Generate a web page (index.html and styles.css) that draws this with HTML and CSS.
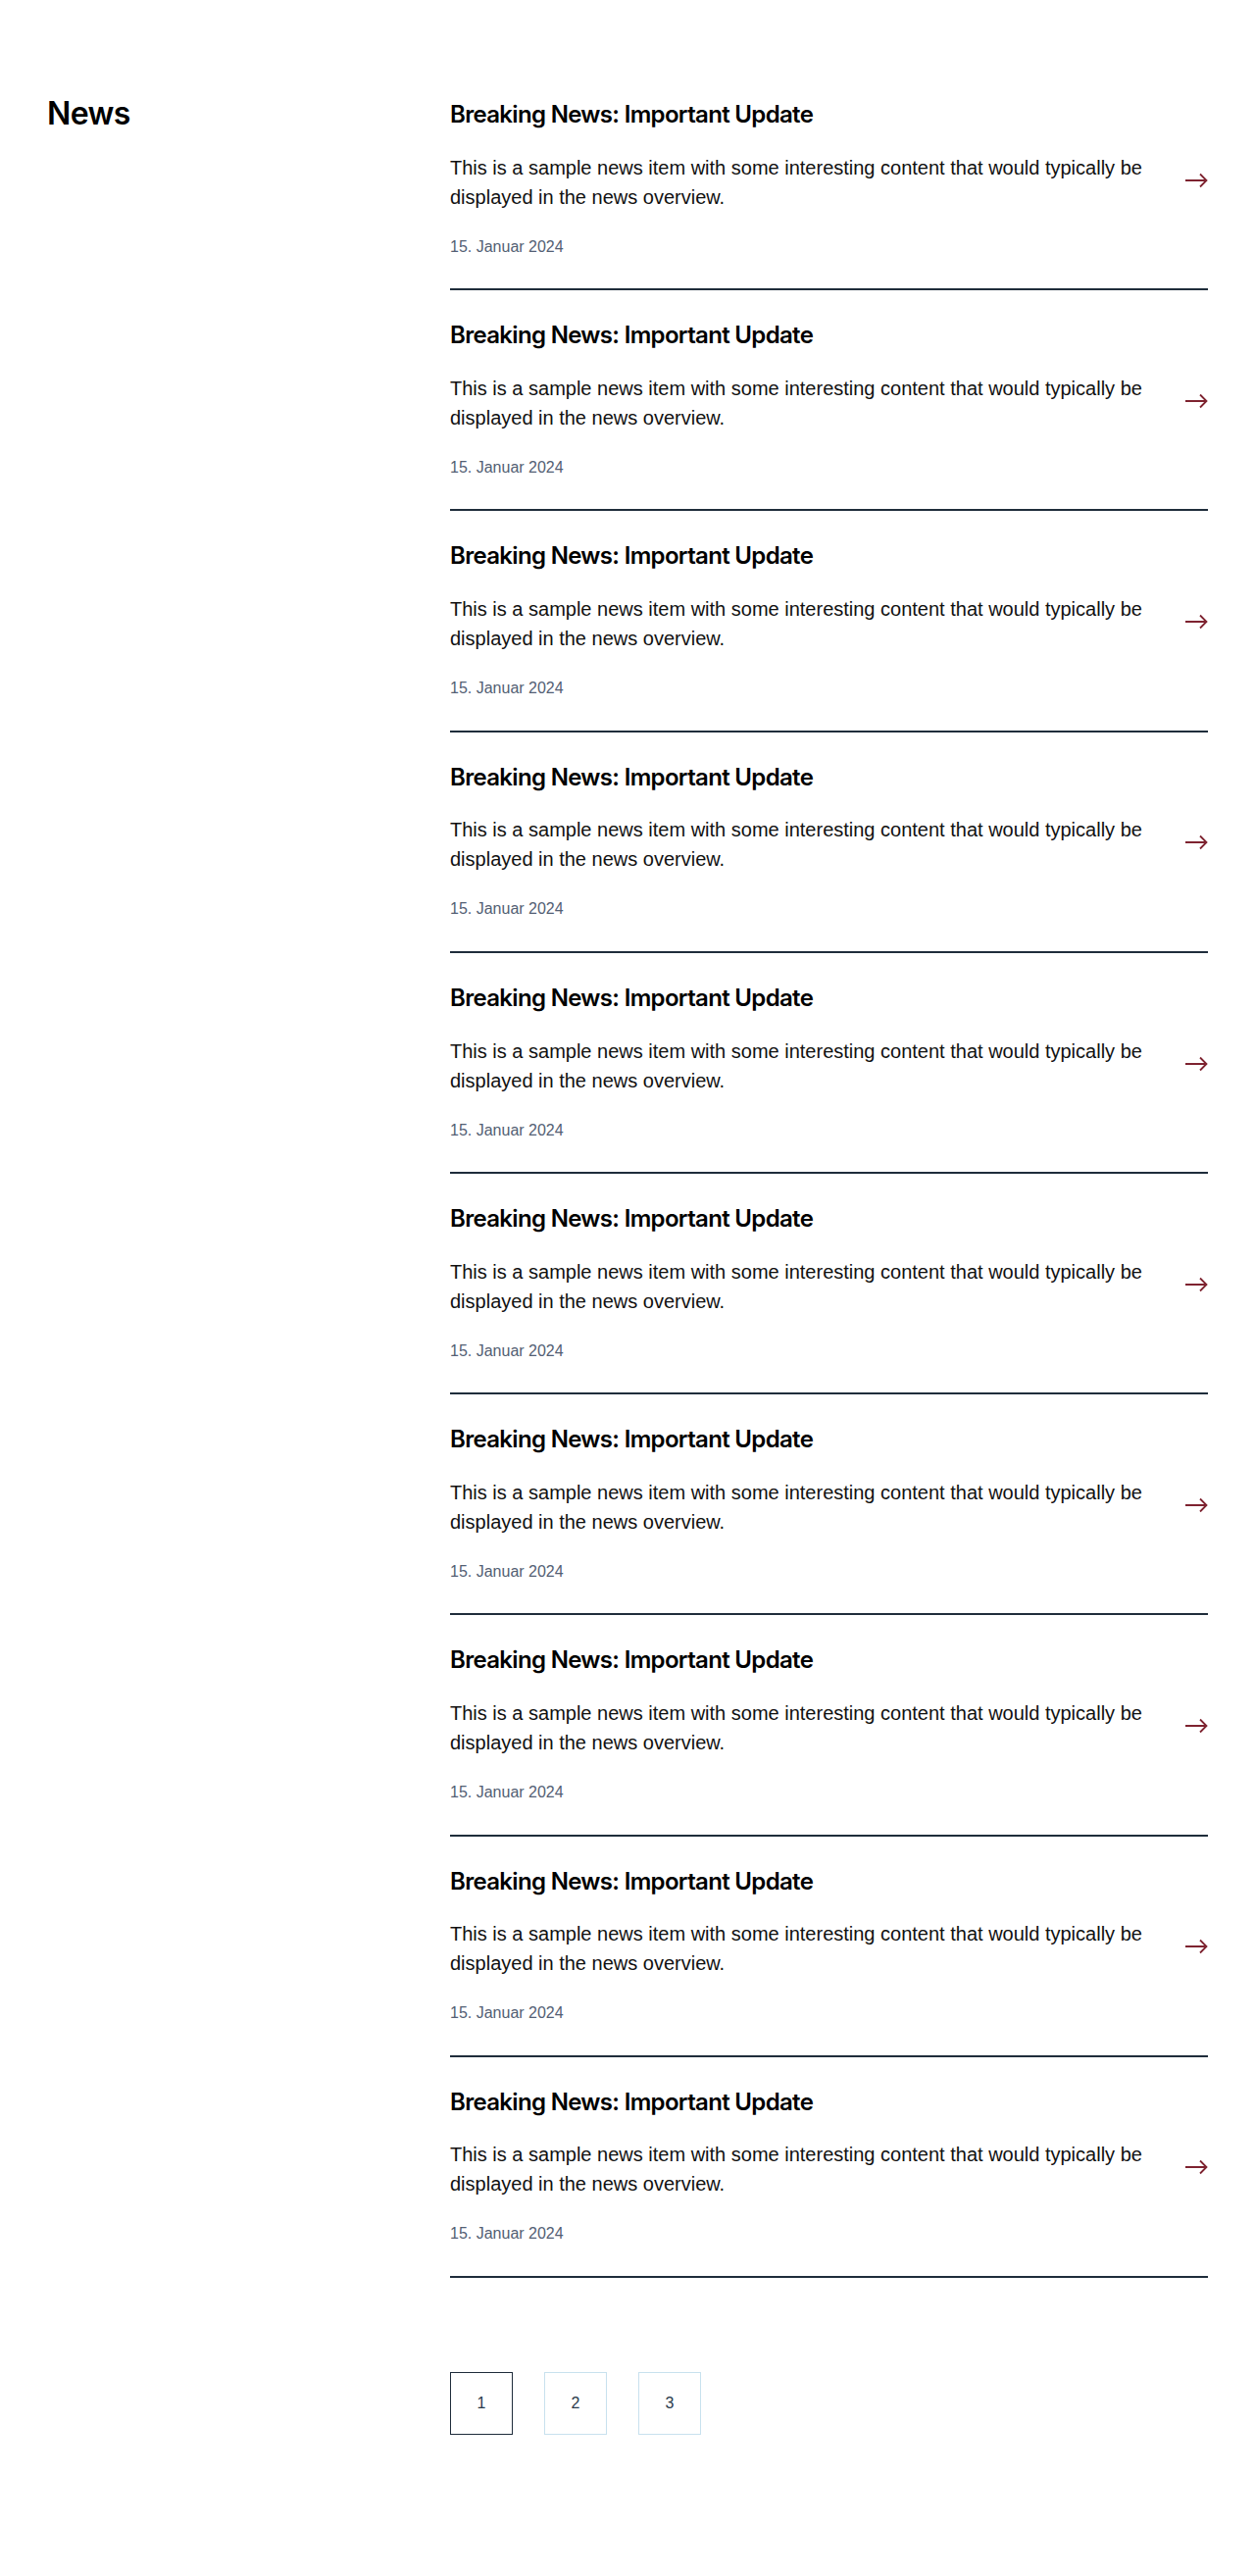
FILE: index.html
```html
<!DOCTYPE html>
<html lang="de">
<head>
<meta charset="utf-8">
<title>News</title>
<link rel="stylesheet" href="styles.css">
</head>
<body>
<main class="page">
  <aside class="side">
    <h1 class="page-title">News</h1>
  </aside>
  <section class="content">
    <ul class="news-list">
      <li class="news-item"><a class="news-link" href="#"><h2 class="news-title">Breaking News: Important Update</h2><div class="news-row"><p class="news-text">This is a sample news item with some interesting content that would typically be displayed in the news overview.</p><svg class="arrow" viewBox="0 0 24 24" width="24" height="24"><path d="M1 12H22.5M16 5.5L22.5 12L16 18.5" fill="none" stroke="currentColor" stroke-width="1.8"/></svg></div><p class="news-date">15. Januar 2024</p></a></li>
      <li class="news-item"><a class="news-link" href="#"><h2 class="news-title">Breaking News: Important Update</h2><div class="news-row"><p class="news-text">This is a sample news item with some interesting content that would typically be displayed in the news overview.</p><svg class="arrow" viewBox="0 0 24 24" width="24" height="24"><path d="M1 12H22.5M16 5.5L22.5 12L16 18.5" fill="none" stroke="currentColor" stroke-width="1.8"/></svg></div><p class="news-date">15. Januar 2024</p></a></li>
      <li class="news-item"><a class="news-link" href="#"><h2 class="news-title">Breaking News: Important Update</h2><div class="news-row"><p class="news-text">This is a sample news item with some interesting content that would typically be displayed in the news overview.</p><svg class="arrow" viewBox="0 0 24 24" width="24" height="24"><path d="M1 12H22.5M16 5.5L22.5 12L16 18.5" fill="none" stroke="currentColor" stroke-width="1.8"/></svg></div><p class="news-date">15. Januar 2024</p></a></li>
      <li class="news-item"><a class="news-link" href="#"><h2 class="news-title">Breaking News: Important Update</h2><div class="news-row"><p class="news-text">This is a sample news item with some interesting content that would typically be displayed in the news overview.</p><svg class="arrow" viewBox="0 0 24 24" width="24" height="24"><path d="M1 12H22.5M16 5.5L22.5 12L16 18.5" fill="none" stroke="currentColor" stroke-width="1.8"/></svg></div><p class="news-date">15. Januar 2024</p></a></li>
      <li class="news-item"><a class="news-link" href="#"><h2 class="news-title">Breaking News: Important Update</h2><div class="news-row"><p class="news-text">This is a sample news item with some interesting content that would typically be displayed in the news overview.</p><svg class="arrow" viewBox="0 0 24 24" width="24" height="24"><path d="M1 12H22.5M16 5.5L22.5 12L16 18.5" fill="none" stroke="currentColor" stroke-width="1.8"/></svg></div><p class="news-date">15. Januar 2024</p></a></li>
      <li class="news-item"><a class="news-link" href="#"><h2 class="news-title">Breaking News: Important Update</h2><div class="news-row"><p class="news-text">This is a sample news item with some interesting content that would typically be displayed in the news overview.</p><svg class="arrow" viewBox="0 0 24 24" width="24" height="24"><path d="M1 12H22.5M16 5.5L22.5 12L16 18.5" fill="none" stroke="currentColor" stroke-width="1.8"/></svg></div><p class="news-date">15. Januar 2024</p></a></li>
      <li class="news-item"><a class="news-link" href="#"><h2 class="news-title">Breaking News: Important Update</h2><div class="news-row"><p class="news-text">This is a sample news item with some interesting content that would typically be displayed in the news overview.</p><svg class="arrow" viewBox="0 0 24 24" width="24" height="24"><path d="M1 12H22.5M16 5.5L22.5 12L16 18.5" fill="none" stroke="currentColor" stroke-width="1.8"/></svg></div><p class="news-date">15. Januar 2024</p></a></li>
      <li class="news-item"><a class="news-link" href="#"><h2 class="news-title">Breaking News: Important Update</h2><div class="news-row"><p class="news-text">This is a sample news item with some interesting content that would typically be displayed in the news overview.</p><svg class="arrow" viewBox="0 0 24 24" width="24" height="24"><path d="M1 12H22.5M16 5.5L22.5 12L16 18.5" fill="none" stroke="currentColor" stroke-width="1.8"/></svg></div><p class="news-date">15. Januar 2024</p></a></li>
      <li class="news-item"><a class="news-link" href="#"><h2 class="news-title">Breaking News: Important Update</h2><div class="news-row"><p class="news-text">This is a sample news item with some interesting content that would typically be displayed in the news overview.</p><svg class="arrow" viewBox="0 0 24 24" width="24" height="24"><path d="M1 12H22.5M16 5.5L22.5 12L16 18.5" fill="none" stroke="currentColor" stroke-width="1.8"/></svg></div><p class="news-date">15. Januar 2024</p></a></li>
      <li class="news-item"><a class="news-link" href="#"><h2 class="news-title">Breaking News: Important Update</h2><div class="news-row"><p class="news-text">This is a sample news item with some interesting content that would typically be displayed in the news overview.</p><svg class="arrow" viewBox="0 0 24 24" width="24" height="24"><path d="M1 12H22.5M16 5.5L22.5 12L16 18.5" fill="none" stroke="currentColor" stroke-width="1.8"/></svg></div><p class="news-date">15. Januar 2024</p></a></li>
    </ul>
    <nav class="pagination">
      <a class="page-btn active" href="#">1</a>
      <a class="page-btn" href="#">2</a>
      <a class="page-btn" href="#">3</a>
    </nav>
  </section>
</main>
</body>
</html>
```
FILE: styles.css
```css
* { box-sizing: border-box; }
html, body { margin: 0; padding: 0; background: #fff; }
body { font-family: "Liberation Sans", Arial, sans-serif; color: #111; }

.page {
  display: flex;
  padding: 96px 48px 144px;
}
.side { width: 411px; flex: none; }
.page-title {
  margin: 0;
  font-family: Inter, "Liberation Sans", sans-serif;
  font-weight: 600;
  font-size: 32px;
  line-height: 40px;
  letter-spacing: -0.02em;
  color: #000;
}
.content { flex: 1; min-width: 0; }

.news-list { list-style: none; margin: 0; padding: 0; }
.news-item { border-bottom: 2px solid #1f2d3b; }
.news-link {
  display: block;
  padding: 32px 0 30.4px;
  text-decoration: none;
  color: inherit;
}
.news-item:first-child .news-link { padding-top: 7px; }
.news-title {
  margin: 0;
  font-family: Inter, "Liberation Sans", sans-serif;
  font-weight: 600;
  font-size: 24px;
  line-height: 1.2;
  letter-spacing: -0.028em;
  color: #000;
}
.news-row {
  display: flex;
  align-items: center;
  gap: 32px;
  margin-top: 24px;
}
.news-text {
  margin: 0;
  flex: 1;
  font-size: 20px;
  line-height: 1.5;
  color: #111;
}
.arrow { flex: none; color: #7e2330; margin-top: -4px; }
.news-date {
  margin: 24px 0 0;
  font-size: 16px;
  line-height: 24px;
  color: #536074;
}

.pagination {
  display: flex;
  gap: 32px;
  margin-top: 96px;
}
.page-btn {
  width: 64px;
  height: 64px;
  display: flex;
  align-items: center;
  justify-content: center;
  border: 1px solid #c8e1ee;
  font-size: 16px;
  color: #2a3a4c;
  text-decoration: none;
}
.page-btn.active { border-color: #1f2d3b; }
```
